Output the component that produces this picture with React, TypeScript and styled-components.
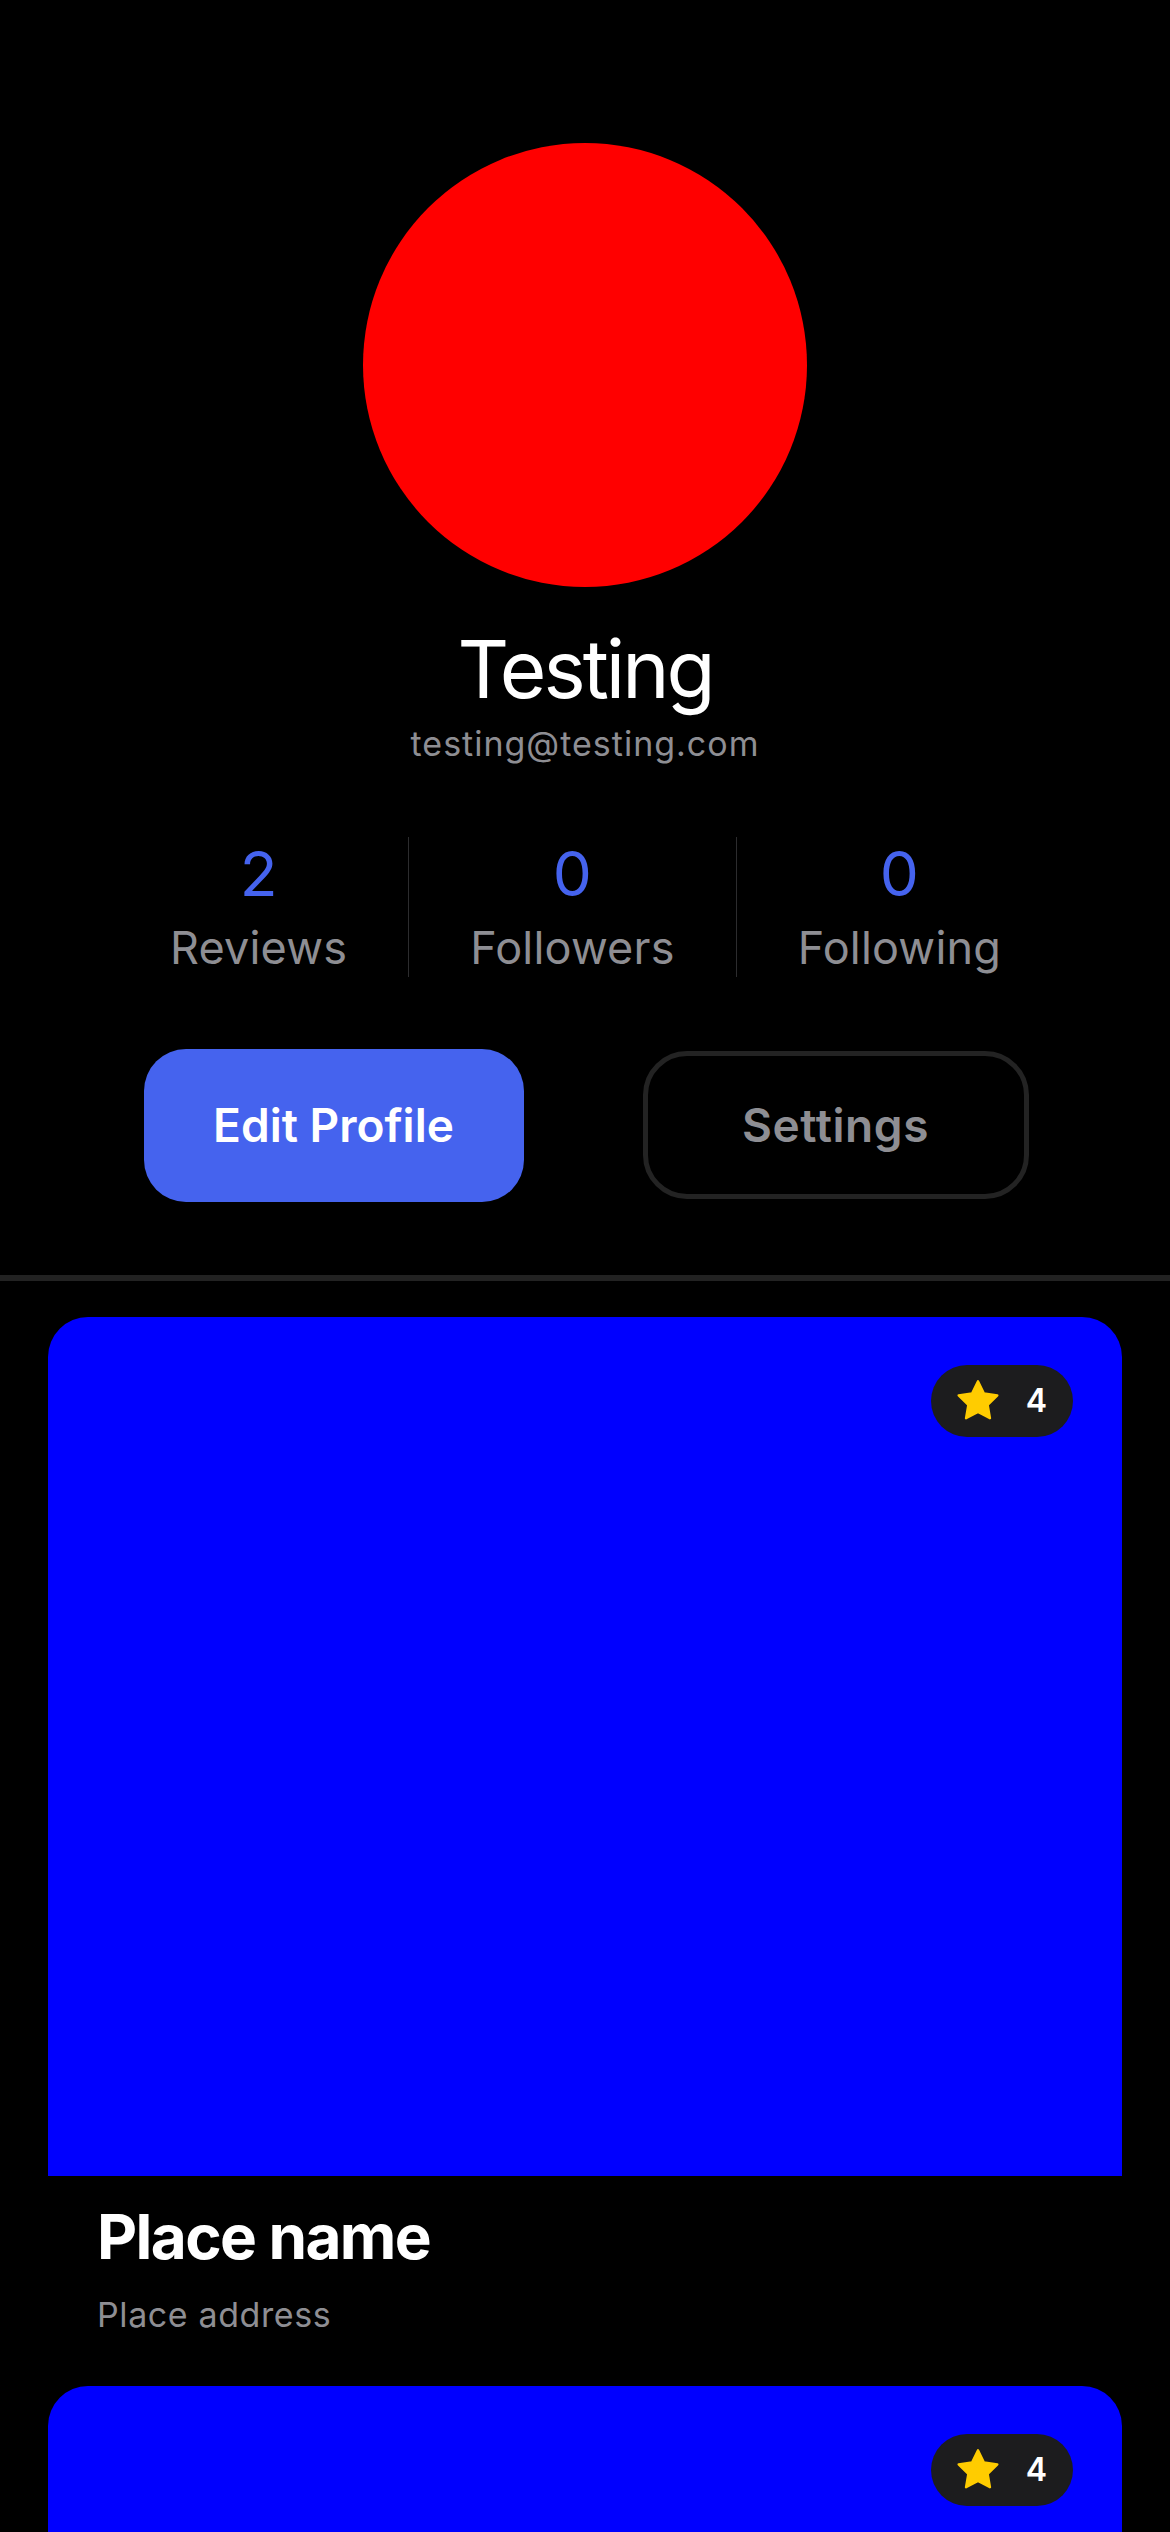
import React from "react";
import styled, { createGlobalStyle } from "styled-components";

const GlobalStyle = createGlobalStyle`
  html, body {
    margin: 0;
    padding: 0;
    background: #000000;
  }
  body {
    font-family: Inter, "Noto Sans", "Liberation Sans", sans-serif;
    color: #ffffff;
  }
  * { box-sizing: border-box; }
`;

const Page = styled.div`
  display: flex;
  flex-direction: column;
  width: 1170px;
  background: #000;
  padding-top: 143px;
`;

const Header = styled.section`
  display: flex;
  flex-direction: column;
  align-items: center;
`;

const Avatar = styled.div`
  width: 444px;
  height: 444px;
  border-radius: 50%;
  background: #ff0000;
`;

const Name = styled.h1`
  margin: 34px 0 0;
  font-size: 80px;
  line-height: 1.2;
  font-weight: 400;
  color: #ffffff;
  letter-spacing: -3px;
`;

const Email = styled.div`
  margin-top: 7px;
  font-size: 34px;
  line-height: 1.2;
  color: #8e8e93;
  letter-spacing: 1px;
`;

const Stats = styled.div`
  display: flex;
  margin-top: 72px;
`;

const Stat = styled.div<{ $divided?: boolean }>`
  display: flex;
  flex-direction: column;
  align-items: center;
  gap: 10px;
  padding: 0 61px;
  height: 140px;
  border-left: 1px solid ${(p) => (p.$divided ? "#2c2c2e" : "transparent")};
`;

const StatValue = styled.div`
  font-size: 62px;
  line-height: 1.2;
  color: #4563ee;
`;

const StatLabel = styled.div`
  font-size: 45px;
  line-height: 1.2;
  color: #8e8e93;
  letter-spacing: 0.2px;
`;

const Actions = styled.div`
  display: flex;
  align-items: center;
  justify-content: center;
  gap: 119px;
  margin-top: 72px;
  padding-left: 2px;
`;

const PrimaryButton = styled.button`
  width: 380px;
  height: 153px;
  border: none;
  border-radius: 42px;
  background: #4563ee;
  color: #ffffff;
  font-family: Inter, "Noto Sans", sans-serif;
  font-size: 46px;
  font-weight: 600;
  padding: 0;
`;

const SecondaryButton = styled.button`
  width: 386px;
  height: 148px;
  border: 5px solid #232323;
  border-radius: 44px;
  background: #000000;
  color: #8e8e93;
  font-family: Inter, "Noto Sans", sans-serif;
  font-size: 46px;
  font-weight: 600;
  letter-spacing: 0.6px;
  padding: 0;
`;

const Divider = styled.hr`
  margin: 73px 0 0;
  height: 6px;
  border: none;
  background: #222222;
`;

const Feed = styled.div`
  display: flex;
  flex-direction: column;
  gap: 26px;
  padding: 36px 48px 0;
`;

const Card = styled.article`
  display: flex;
  flex-direction: column;
`;

const CardImage = styled.div`
  position: relative;
  height: 859px;
  background: #0000ff;
  border-radius: 40px 40px 0 0;
`;

const RatingBadge = styled.div`
  position: absolute;
  top: 48px;
  right: 49px;
  height: 72px;
  display: flex;
  align-items: center;
  gap: 24px;
  padding: 0 26px 0 23px;
  border-radius: 36px;
  background: #1c1c1e;
  color: #ffffff;
  font-size: 32px;
  font-weight: 600;
`;

const CardBody = styled.div`
  display: flex;
  flex-direction: column;
  gap: 21px;
  padding: 24px 49px 24px;
`;

const PlaceName = styled.h2`
  margin: 0;
  font-size: 62px;
  line-height: 1.2;
  font-weight: 700;
  color: #ffffff;
  letter-spacing: -1.6px;
`;

const PlaceAddress = styled.div`
  font-size: 34px;
  line-height: 1.2;
  color: #8e8e93;
  letter-spacing: 0.6px;
`;

const Star = () => (
  <svg width="48" height="47" viewBox="0 0 24 24" aria-hidden="true">
    <path
      d="M12 2.2l3.05 6.2 6.85 1-4.95 4.82 1.17 6.82L12 17.83l-6.12 3.21 1.17-6.82L2.1 9.4l6.85-1z"
      fill="#ffcc00"
      stroke="#ffcc00"
      strokeWidth="1.2"
      strokeLinejoin="round"
    />
  </svg>
);

const places = [
  { id: 1, name: "Place name", address: "Place address", rating: 4 },
  { id: 2, name: "Place name", address: "Place address", rating: 4 },
];

const stats = [
  { value: 2, label: "Reviews" },
  { value: 0, label: "Followers" },
  { value: 0, label: "Following" },
];

export default function App() {
  return (
    <>
      <GlobalStyle />
      <Page>
        <Header>
          <Avatar />
          <Name>Testing</Name>
          <Email>testing@testing.com</Email>
          <Stats>
            {stats.map((s, i) => (
              <Stat key={s.label} $divided={i > 0}>
                <StatValue>{s.value}</StatValue>
                <StatLabel>{s.label}</StatLabel>
              </Stat>
            ))}
          </Stats>
          <Actions>
            <PrimaryButton>Edit Profile</PrimaryButton>
            <SecondaryButton>Settings</SecondaryButton>
          </Actions>
        </Header>
        <Divider />
        <Feed>
          {places.map((p) => (
            <Card key={p.id}>
              <CardImage>
                <RatingBadge>
                  <Star />
                  <span>{p.rating}</span>
                </RatingBadge>
              </CardImage>
              <CardBody>
                <PlaceName>{p.name}</PlaceName>
                <PlaceAddress>{p.address}</PlaceAddress>
              </CardBody>
            </Card>
          ))}
        </Feed>
      </Page>
    </>
  );
}
